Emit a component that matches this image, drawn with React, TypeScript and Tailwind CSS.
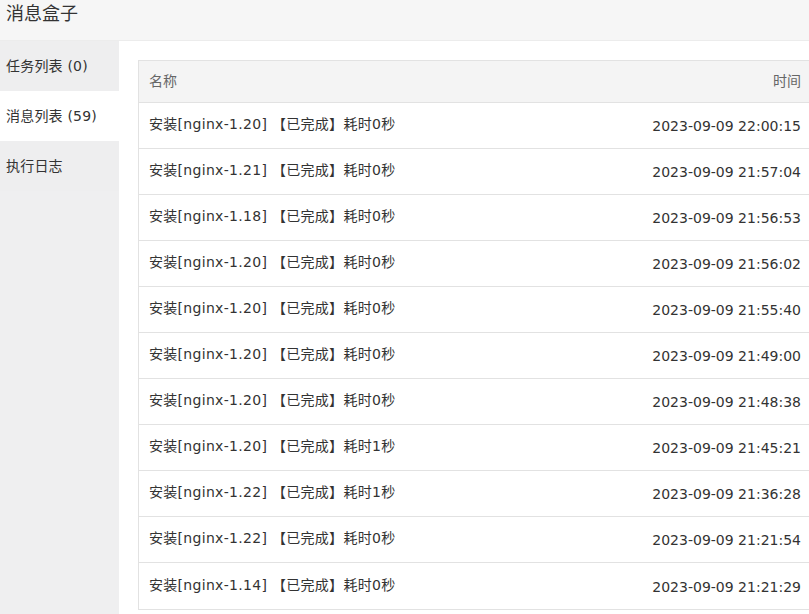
const rows = [
  { name: "安装[nginx-1.20] 【已完成】耗时0秒", time: "2023-09-09 22:00:15" },
  { name: "安装[nginx-1.21] 【已完成】耗时0秒", time: "2023-09-09 21:57:04" },
  { name: "安装[nginx-1.18] 【已完成】耗时0秒", time: "2023-09-09 21:56:53" },
  { name: "安装[nginx-1.20] 【已完成】耗时0秒", time: "2023-09-09 21:56:02" },
  { name: "安装[nginx-1.20] 【已完成】耗时0秒", time: "2023-09-09 21:55:40" },
  { name: "安装[nginx-1.20] 【已完成】耗时0秒", time: "2023-09-09 21:49:00" },
  { name: "安装[nginx-1.20] 【已完成】耗时0秒", time: "2023-09-09 21:48:38" },
  { name: "安装[nginx-1.20] 【已完成】耗时1秒", time: "2023-09-09 21:45:21" },
  { name: "安装[nginx-1.22] 【已完成】耗时1秒", time: "2023-09-09 21:36:28" },
  { name: "安装[nginx-1.22] 【已完成】耗时0秒", time: "2023-09-09 21:21:54" },
  { name: "安装[nginx-1.14] 【已完成】耗时0秒", time: "2023-09-09 21:21:29" },
];

const tabs = [
  { label: "任务列表 (0)", active: false },
  { label: "消息列表 (59)", active: true },
  { label: "执行日志", active: false },
];

const App = () => {
  return (
    <div
      className="w-[809px] h-[614px] overflow-hidden bg-white flex flex-col text-[#333]"
      style={{ fontFamily: '"DejaVu Sans", "Noto Sans CJK SC", sans-serif' }}
    >
      {/* Title bar */}
      <div className="h-[41px] shrink-0 bg-[#f6f6f6] border-b border-[#ececec] px-[6px] flex items-center">
        <span className="text-[18px] text-[#333] leading-none -mt-[13px]">消息盒子</span>
      </div>

      <div className="flex flex-1 min-h-0">
        {/* Side tabs */}
        <div className="w-[119px] shrink-0 bg-[#efeff0] flex flex-col">
          {tabs.map((t) => (
            <div
              key={t.label}
              className={
                t.active
                  ? "h-[50px] px-[6px] flex items-center text-[14px] tracking-[0.2px] bg-white"
                  : "h-[50px] px-[6px] flex items-center text-[14px] tracking-[0.2px] bg-[#eeeeef]"
              }
            >
              {t.label}
            </div>
          ))}
        </div>

        {/* Message table */}
        <div className="flex-1 pl-[19px] pt-[19px] -mr-[2px]">
          <div className="border border-[#e2e2e2]">
            <div className="h-[42px] bg-[#f4f4f4] flex items-center justify-between pl-[10px] pr-[9px] text-[14px] text-[#666] border-b border-[#e2e2e2]">
              <span>名称</span>
              <span>时间</span>
            </div>
            {rows.map((r, i) => (
              <div
                key={i}
                className="h-[46px] flex items-center justify-between pl-[10px] pr-[9px] text-[14px] border-b border-[#e2e2e2] last:border-b-0"
              >
                <span className="-mt-[2px] tracking-[0.3px]">{r.name}</span>
                <span className="mt-[2px]">{r.time}</span>
              </div>
            ))}
          </div>
        </div>
      </div>
    </div>
  );
};

export default App;
